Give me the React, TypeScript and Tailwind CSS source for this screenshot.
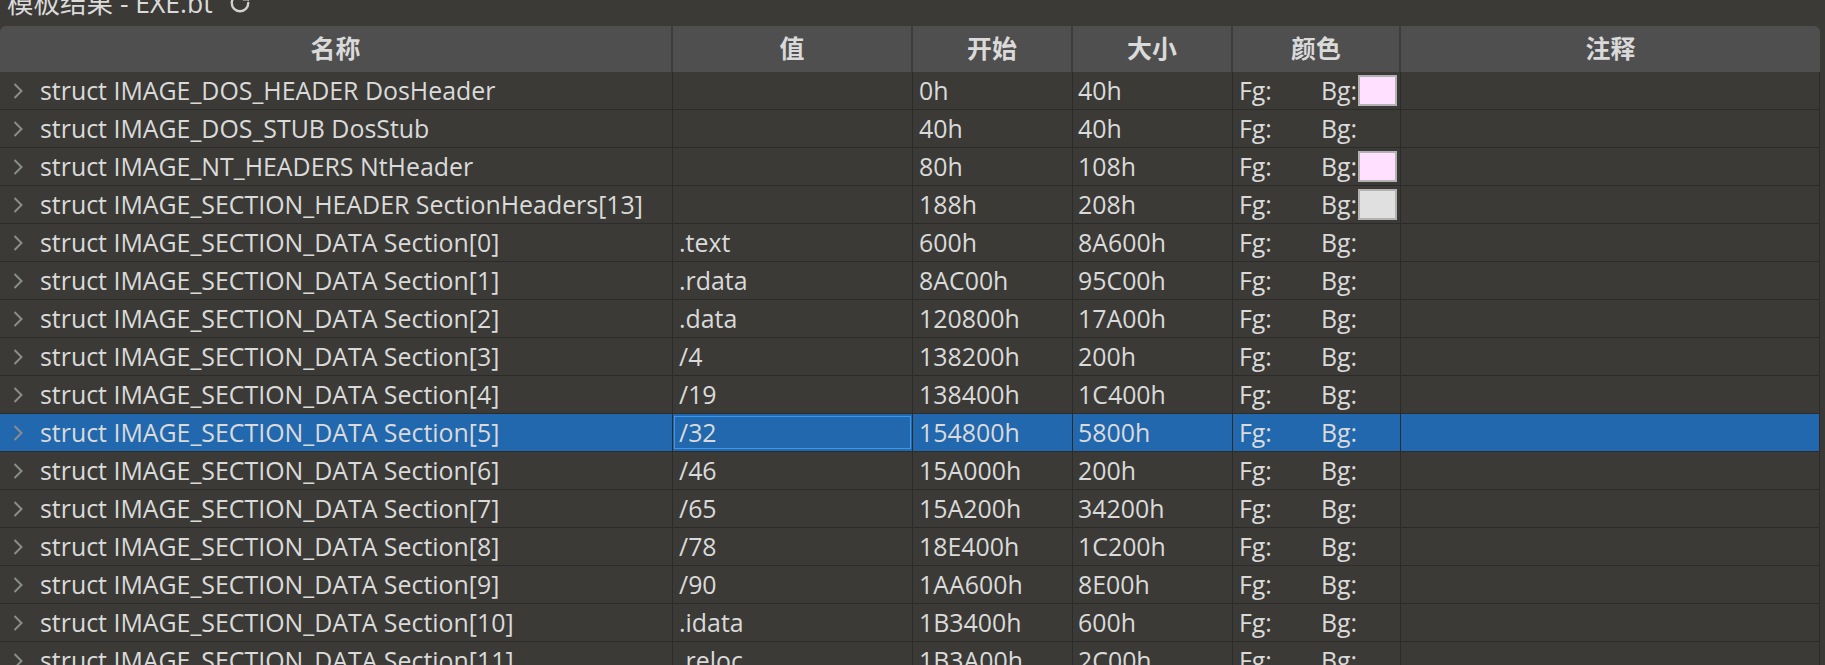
import { RotateCw } from "lucide-react";

type Row = {
  name: string;
  value: string;
  start: string;
  size: string;
  bg?: string;
};

const rows: Row[] = [
  { name: "struct IMAGE_DOS_HEADER DosHeader", value: "", start: "0h", size: "40h", bg: "bg-[#ffe0ff]" },
  { name: "struct IMAGE_DOS_STUB DosStub", value: "", start: "40h", size: "40h" },
  { name: "struct IMAGE_NT_HEADERS NtHeader", value: "", start: "80h", size: "108h", bg: "bg-[#ffe0ff]" },
  { name: "struct IMAGE_SECTION_HEADER SectionHeaders[13]", value: "", start: "188h", size: "208h", bg: "bg-[#e0e0e0]" },
  { name: "struct IMAGE_SECTION_DATA Section[0]", value: ".text", start: "600h", size: "8A600h" },
  { name: "struct IMAGE_SECTION_DATA Section[1]", value: ".rdata", start: "8AC00h", size: "95C00h" },
  { name: "struct IMAGE_SECTION_DATA Section[2]", value: ".data", start: "120800h", size: "17A00h" },
  { name: "struct IMAGE_SECTION_DATA Section[3]", value: "/4", start: "138200h", size: "200h" },
  { name: "struct IMAGE_SECTION_DATA Section[4]", value: "/19", start: "138400h", size: "1C400h" },
  { name: "struct IMAGE_SECTION_DATA Section[5]", value: "/32", start: "154800h", size: "5800h" },
  { name: "struct IMAGE_SECTION_DATA Section[6]", value: "/46", start: "15A000h", size: "200h" },
  { name: "struct IMAGE_SECTION_DATA Section[7]", value: "/65", start: "15A200h", size: "34200h" },
  { name: "struct IMAGE_SECTION_DATA Section[8]", value: "/78", start: "18E400h", size: "1C200h" },
  { name: "struct IMAGE_SECTION_DATA Section[9]", value: "/90", start: "1AA600h", size: "8E00h" },
  { name: "struct IMAGE_SECTION_DATA Section[10]", value: ".idata", start: "1B3400h", size: "600h" },
  { name: "struct IMAGE_SECTION_DATA Section[11]", value: ".reloc", start: "1B3A00h", size: "2C00h" },
];

const SELECTED = 9;

function Chevron() {
  return (
    <svg width="10" height="16" viewBox="0 0 10 16" className="shrink-0">
      <polyline points="1.5,1 8.5,8 1.5,15" fill="none" stroke="#8c8c8c" strokeWidth="2" />
    </svg>
  );
}

function HeaderCell({ label, width }: { label: string; width: string }) {
  return (
    <div className={`${width} flex items-center justify-center border-r-2 border-[#3d3d3d] last:border-r-0 font-bold`}>
      {label}
    </div>
  );
}

export default function App() {
  return (
    <div
      className="w-[1825px] h-[665px] overflow-hidden bg-[#3b3a36] text-[#dadada] text-[24.9px]"
      style={{ fontFamily: '"Open Sans", "Noto Sans CJK SC", sans-serif' }}
    >
      <div className="h-[26px] overflow-hidden">
        <div className="flex items-center pl-[7px] mt-[-9px] leading-[24px] text-[26.5px]">
          <span>模板结果 - EXE.bt</span>
          <RotateCw className="ml-[16px] h-[22px] w-[22px] text-[#d0d0d0]" strokeWidth={2.6} />
        </div>
      </div>

      <div className="w-[1820px]">
        <div className="flex h-[46px] bg-[#4f4f4f] rounded-t-[6px]">
          <HeaderCell label="名称" width="w-[673px]" />
          <HeaderCell label="值" width="w-[240px]" />
          <HeaderCell label="开始" width="w-[160px]" />
          <HeaderCell label="大小" width="w-[160px]" />
          <HeaderCell label="颜色" width="w-[168px]" />
          <HeaderCell label="注释" width="w-[419px]" />
        </div>

        {rows.map((row, i) => {
          const selected = i === SELECTED;
          return (
            <div
              key={row.name}
              className={`flex h-[38px] border-b border-[#2b2b2b] ${selected ? "bg-[#2168ae]" : ""}`}
            >
              <div className="w-[673px] flex items-center pl-[13px] border-r border-[#2b2b2b] whitespace-nowrap overflow-hidden">
                <Chevron />
                <span className="ml-[17px]">{row.name}</span>
              </div>
              <div className="w-[240px] flex items-stretch border-r border-[#2b2b2b] py-[2px] px-[1px]">
                <div
                  className={`flex-1 flex items-center pl-[4px] border ${
                    selected ? "border-[#3a98ec]" : "border-transparent"
                  }`}
                >
                  {row.value}
                </div>
              </div>
              <div className="w-[160px] flex items-center pl-[6px] border-r border-[#2b2b2b]">{row.start}</div>
              <div className="w-[160px] flex items-center pl-[5px] border-r border-[#2b2b2b]">{row.size}</div>
              <div className="w-[168px] flex items-center pl-[6px] border-r border-[#2b2b2b]">
                <span className="w-[82px]">Fg:</span>
                <span>Bg:</span>
                {row.bg && (
                  <span className={`ml-[1px] w-[39px] h-[31px] border-2 border-[#b2b2b2] ${row.bg}`} />
                )}
              </div>
              <div className="w-[419px] border-r border-[#2b2b2b]" />
            </div>
          );
        })}
      </div>
    </div>
  );
}
